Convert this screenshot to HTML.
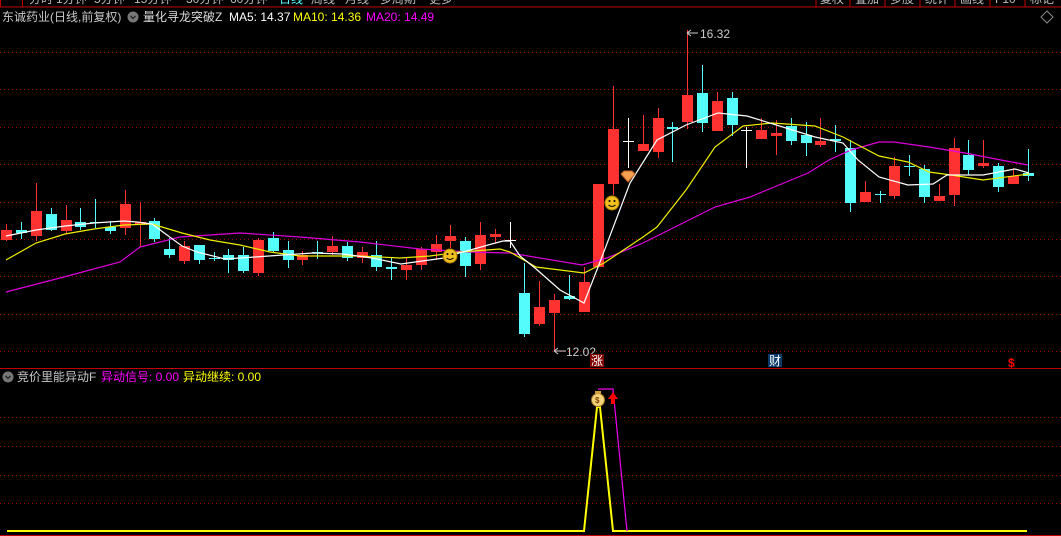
<!DOCTYPE html>
<html><head><meta charset="utf-8">
<style>
html,body{margin:0;padding:0;background:#000;}
body{width:1061px;height:536px;overflow:hidden;position:relative;font-family:"Liberation Sans","Noto Sans CJK SC",sans-serif;}
.t{position:absolute;font-size:12px;white-space:nowrap;line-height:14px;}
</style></head><body>
<svg id="s" width="1061" height="536" style="position:absolute;left:0;top:0" xmlns="http://www.w3.org/2000/svg">
<rect width="1061" height="536" fill="#000"/>
<line x1="0" y1="7" x2="1061" y2="7" stroke="#c00000" stroke-width="1"/>
<rect x="0.5" y="-2" width="22" height="9" fill="none" stroke="#c00000"/>
<g stroke="#c00000"><line x1="816" y1="0" x2="816" y2="7"/><line x1="850" y1="0" x2="850" y2="7"/><line x1="885" y1="0" x2="885" y2="7"/><line x1="920" y1="0" x2="920" y2="7"/><line x1="955" y1="0" x2="955" y2="7"/><line x1="990" y1="0" x2="990" y2="7"/><line x1="1025" y1="0" x2="1025" y2="7"/></g>
<g fill="#bbb" font-size="12" font-family="Liberation Sans, Noto Sans CJK SC, sans-serif">
<text x="29" y="3">分时</text><text x="56" y="3">1分钟</text><text x="94" y="3">5分钟</text><text x="134" y="3">15分钟</text><text x="186" y="3">30分钟</text><text x="230" y="3">60分钟</text>
<text x="279" y="3" fill="#5ff">日线</text>
<text x="311" y="3">周线</text><text x="345" y="3">月线</text><text x="380" y="3">多周期</text><text x="429" y="3">更多</text>
<text x="820" y="3">复权</text><text x="855" y="3">叠加</text><text x="890" y="3">多股</text><text x="925" y="3">统计</text><text x="960" y="3">画线</text><text x="995" y="3">F10</text><text x="1030" y="3">标记</text>
</g>
<path d="M1047 11 L1053 17 L1047 23 L1041 17 Z" fill="none" stroke="#888"/>
<g stroke="#a00000" stroke-dasharray="1,3">
<line x1="0" y1="52.5" x2="1061" y2="52.5"/><line x1="0" y1="89.5" x2="1061" y2="89.5"/><line x1="0" y1="127.5" x2="1061" y2="127.5"/><line x1="0" y1="164.5" x2="1061" y2="164.5"/><line x1="0" y1="202.5" x2="1061" y2="202.5"/><line x1="0" y1="239.5" x2="1061" y2="239.5"/><line x1="0" y1="276.5" x2="1061" y2="276.5"/><line x1="0" y1="314.5" x2="1061" y2="314.5"/><line x1="0" y1="351.5" x2="1061" y2="351.5"/>
<line x1="0" y1="417.5" x2="1061" y2="417.5"/><line x1="0" y1="446.5" x2="1061" y2="446.5"/><line x1="0" y1="475.5" x2="1061" y2="475.5"/><line x1="0" y1="503.5" x2="1061" y2="503.5"/>
</g>
<line x1="0" y1="368.5" x2="1061" y2="368.5" stroke="#c00000"/>
<line x1="0" y1="535.5" x2="1061" y2="535.5" stroke="#c00000"/>
<g id="c"></g>
<polyline fill="none" stroke="#d0d" stroke-width="1.2" points="6,292 60,278 120,262 140,247 180,237 240,233 300,237 360,242 420,249 470,252 510,253 582,265 607,258 643,243 679,225 715,207 750,197 779,185 808,173 829,160 851,150 879,142 894,142 929,147 965,153 1001,160 1028,165"/>
<polyline fill="none" stroke="#ee0" stroke-width="1.2" points="6,260 36,243 65,234 94,229 124,225 152,224 182,233 210,240 240,245 270,252 300,256 330,256 360,256 400,258 430,256 460,252 500,249 510,252 536,267 584,273 604,263 643,237 657,227 686,190 715,147 743,126 772,123 815,126 843,137 879,156 908,162 929,172 951,175 983,180 1029,174"/>
<polyline fill="none" stroke="#fff" stroke-width="1.2" points="6,236 36,230 65,226 94,223 124,221 137,222 152,224 167,235 182,246 197,252 225,259 255,257 283,255 313,253 343,254 372,258 401,264 415,262 444,258 459,253 474,249 488,245 503,241 510,241 520,256 535,268 560,290 584,303 600,262 630,183 657,140 686,125 718,113 747,116 786,128 815,137 843,143 858,160 879,177 908,185 933,184 947,175 983,175 1015,169 1029,173"/>
<g stroke="#ccc" fill="none"><path d="M687 33 H698 M687 33 L691 30 M687 33 L691 36"/><path d="M554 351 H566 M554 351 L558 348 M554 351 L558 354"/></g>
<text x="700" y="38" fill="#ccc" font-size="12" font-family="Liberation Sans, sans-serif">16.32</text>
<text x="566" y="356" fill="#ccc" font-size="12" font-family="Liberation Sans, sans-serif">12.02</text>
<g><circle cx="450" cy="256" r="7" fill="#f0c020" stroke="#b08000"/><circle cx="447.5" cy="254" r="1" fill="#000"/><circle cx="452.5" cy="254" r="1" fill="#000"/><path d="M446.5 258 Q450 261 453.5 258" stroke="#000" fill="none"/></g>
<g><circle cx="612" cy="203" r="7" fill="#f0c020" stroke="#b08000"/><circle cx="609.5" cy="201" r="1" fill="#000"/><circle cx="614.5" cy="201" r="1" fill="#000"/><path d="M608.5 205 Q612 208 615.5 205" stroke="#000" fill="none"/></g>
<path d="M621 174 L624 171 L632 171 L635 174 L628 182 Z" fill="#f4a050" stroke="#c06020"/>
<rect x="590" y="354" width="14" height="13" fill="#800000"/><text x="591" y="365" fill="#fff" font-size="12" font-family="Noto Sans CJK SC, sans-serif">涨</text>
<rect x="768" y="354" width="14" height="13" fill="#0a3a6a"/><text x="769" y="365" fill="#fff" font-size="12" font-family="Noto Sans CJK SC, sans-serif">财</text>
<text x="1008" y="367" fill="#f00" font-size="12" font-weight="bold" font-family="Liberation Sans, sans-serif">$</text>
<polyline fill="none" stroke="#ff0" stroke-width="2" points="7,531 584,531 597,407 600,407 613,531 1027,531"/>
<polyline fill="none" stroke="#e0e" stroke-width="1.2" points="598,389 613,389 627,531"/>
<circle cx="598" cy="400" r="6.5" fill="#f2d27a" stroke="#a07020"/><rect x="595" y="391" width="6" height="3" fill="#d0a040"/>
<text x="595" y="403" fill="#804000" font-size="8" font-weight="bold" font-family="Liberation Sans, sans-serif">$</text>
<path d="M613 392 L618 399 L615 399 L615 404 L611 404 L611 399 L608 399 Z" fill="#f00"/>
<circle cx="133" cy="17" r="5.5" fill="#777"/><path d="M130.5 16 L133 18.5 L135.5 16" stroke="#222" fill="none" stroke-width="1.3"/>
<circle cx="8" cy="377" r="5.5" fill="#777"/><path d="M5.5 376 L8 378.5 L10.5 376" stroke="#222" fill="none" stroke-width="1.3"/>
</svg>
<div class="t" style="left:2px;top:10px;color:#c8c8c8">东诚药业(日线,前复权)</div>
<div class="t" style="left:143px;top:10px;color:#ddd">量化寻龙突破Z</div>
<div class="t" style="left:229px;top:10px;color:#fff">MA5: 14.37</div>
<div class="t" style="left:293px;top:10px;color:#ff0">MA10: 14.36</div>
<div class="t" style="left:366px;top:10px;color:#f0f">MA20: 14.49</div>
<div class="t" style="left:17px;top:370px;color:#c8c8c8">竞价里能异动F</div>
<div class="t" style="left:101px;top:370px;color:#f0f">异动信号: 0.00</div>
<div class="t" style="left:183px;top:370px;color:#ff0">异动继续: 0.00</div>
<script>
var d=[
['r',224,241,230,240],['c',222,239,230,233],['r',183,241,211,236],['c',208,231,214,230],['r',205,234,220,231],
['c',208,230,222,227],['c',199,228,222,223],['c',221,234,227,231],['r',190,235,204,228],['r',202,247,222,224],
['c',218,242,221,239],['c',238,258,249,255],['r',241,264,246,261],['c',245,264,245,260],['c',252,261,258,259],
['c',249,273,255,260],['c',247,273,255,271],['r',238,276,240,273],['c',232,252,238,251],['c',241,268,250,260],
['r',251,265,255,260],['c',241,259,252,253],['r',236,255,246,252],['c',242,261,246,258],['r',247,263,252,258],
['c',241,271,255,267],['c',258,280,267,269],['r',258,280,265,270],['r',247,270,249,265],['r',235,260,244,252],
['r',225,248,236,241],['c',237,277,241,266],['r',222,270,235,264],['r',229,243,234,237],['w',222,248,240,241],
['c',263,337,293,334],['r',281,326,307,324],['r',294,351,300,313],['c',275,300,296,299],['r',267,312,282,312],
['r',184,267,184,267],['r',86,195,129,184],['w',118,168,141,142],['r',115,151,144,151],['r',108,158,118,152],
['c',122,162,127,129],['r',30,129,95,122],['c',65,132,93,123],['r',92,131,101,131],['c',92,136,98,125],
['w',127,168,130,131],['r',118,139,130,139],['r',120,155,133,136],['c',118,145,126,141],['c',122,156,135,143],
['r',118,147,141,145],['c',125,152,139,141],['c',140,212,148,203],['r',181,202,192,202],['c',191,203,194,195],
['r',157,199,166,196],['c',155,176,166,167],['c',165,203,169,197],['r',184,201,196,201],['r',138,206,148,195],
['c',140,175,155,170],['r',140,168,163,166],['c',163,192,166,187],['r',168,184,176,184],['c',149,181,173,176]];
var g=document.getElementById('c'),h='';
d.forEach(function(k,i){var x=Math.round(6.4+i*14.8),col=k[0]=='r'?'#ff3232':k[0]=='c'?'#54fcfc':'#fff';
h+='<line x1="'+(x+0.5)+'" y1="'+k[1]+'" x2="'+(x+0.5)+'" y2="'+k[2]+'" stroke="'+col+'"/>';
var bh=Math.max(k[4]-k[3],1);h+='<rect x="'+(x-5)+'" y="'+k[3]+'" width="11" height="'+bh+'" fill="'+col+'"/>';});
g.innerHTML=h;
</script>
</body></html>
